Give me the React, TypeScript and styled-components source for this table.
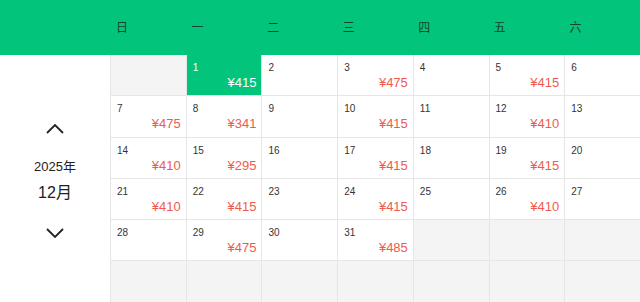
import React from "react";
import styled, { createGlobalStyle } from "styled-components";

const GlobalStyle = createGlobalStyle`
  html, body {
    margin: 0;
    padding: 0;
    background: #ffffff;
    overflow: hidden;
  }
  body {
    font-family: "Liberation Sans", "Noto Sans CJK SC", sans-serif;
  }
`;

const WEEKDAYS = ["日", "一", "二", "三", "四", "五", "六"];

const prices: { [day: number]: number } = {
  1: 415, 3: 475, 5: 415,
  7: 475, 8: 341, 10: 415, 12: 410,
  14: 410, 15: 295, 17: 415, 19: 415,
  21: 410, 22: 415, 24: 415, 26: 410,
  29: 475, 31: 485
};

// december 2025 starts on a monday, pad the grid to 6 weeks
const buildCells = () => {
  const cells: (number | null)[] = [null];
  for (let d = 1; d <= 31; d++) cells.push(d);
  while (cells.length < 42) cells.push(null);
  return cells;
};

const Chevron: React.FC<{ down?: boolean }> = ({ down }) => (
  <svg width="18" height="10" viewBox="0 0 18 10">
    <path
      d={down ? "M1 1 L9 9 L17 1" : "M1 9 L9 1 L17 9"}
      fill="none"
      stroke="#222"
      strokeWidth="1.8"
    />
  </svg>
);

const App: React.FC = () => {
  const cells = buildCells();
  const selected = 1;

  return (
    <>
      <GlobalStyle />
      <Page>
        <Header>
          <HeaderSpacer />
          {WEEKDAYS.map(w => (
            <WeekLabel key={w}>{w}</WeekLabel>
          ))}
        </Header>
        <Body>
          <Side>
            <NavButton>
              <Chevron />
            </NavButton>
            <Year>2025年</Year>
            <Month>12月</Month>
            <NavButton>
              <Chevron down />
            </NavButton>
          </Side>
          <Grid>
            {cells.map((day, i) =>
              day === null ? (
                <EmptyCell key={i} />
              ) : (
                <Cell key={i} $active={day === selected}>
                  <DayNum>{day}</DayNum>
                  {prices[day] !== undefined && (
                    <Price $active={day === selected}>¥{prices[day]}</Price>
                  )}
                </Cell>
              )
            )}
          </Grid>
        </Body>
      </Page>
    </>
  );
};

const Page = styled.div`
  width: 640px;
  height: 302px;
  display: flex;
  flex-direction: column;
`;

const Header = styled.div`
  height: 55px;
  background: #02c57b;
  display: grid;
  grid-template-columns: 111px repeat(7, 1fr);
  column-gap: 1px;
  align-items: center;
  flex-shrink: 0;
`;

const HeaderSpacer = styled.div``;

const WeekLabel = styled.div`
  padding-left: 4px;
  padding-bottom: 2px;
  font-size: 12px;
  color: #16442d;
`;

const Body = styled.div`
  display: flex;
  flex: 1;
  min-height: 0;
`;

const Side = styled.div`
  width: 110px;
  flex-shrink: 0;
  display: flex;
  flex-direction: column;
  align-items: center;
  justify-content: center;
  padding-top: 4px;
`;

const NavButton = styled.div`
  height: 20px;
  display: flex;
  align-items: center;
  justify-content: center;
  cursor: pointer;
`;

const Year = styled.div`
  margin-top: 17px;
  font-size: 13px;
  color: #222;
`;

const Month = styled.div`
  margin-top: 4px;
  margin-bottom: 20px;
  font-size: 16px;
  color: #222;
`;

const Grid = styled.div`
  flex: 1;
  display: grid;
  grid-template-columns: repeat(7, 1fr);
  grid-template-rows: repeat(6, 40.3px);
  gap: 1px;
  background: #e6e6e6;
  border-left: 1px solid #e6e6e6;
  align-content: start;
`;

const Cell = styled.div<{ $active?: boolean }>`
  background: ${p => (p.$active ? "#02c57b" : "#ffffff")};
  color: ${p => (p.$active ? "#ffffff" : "#333333")};
  display: flex;
  flex-direction: column;
  padding: 7px 5px 0 6px;
  box-sizing: border-box;
`;

const EmptyCell = styled.div`
  background: #f4f4f4;
`;

const DayNum = styled.div`
  font-size: 10px;
  line-height: 12px;
`;

const Price = styled.div<{ $active?: boolean }>`
  align-self: flex-end;
  margin-top: 1px;
  font-size: 13px;
  line-height: 15px;
  color: ${p => (p.$active ? "#ffffff" : "#ef5a4e")};
`;

export default App;
